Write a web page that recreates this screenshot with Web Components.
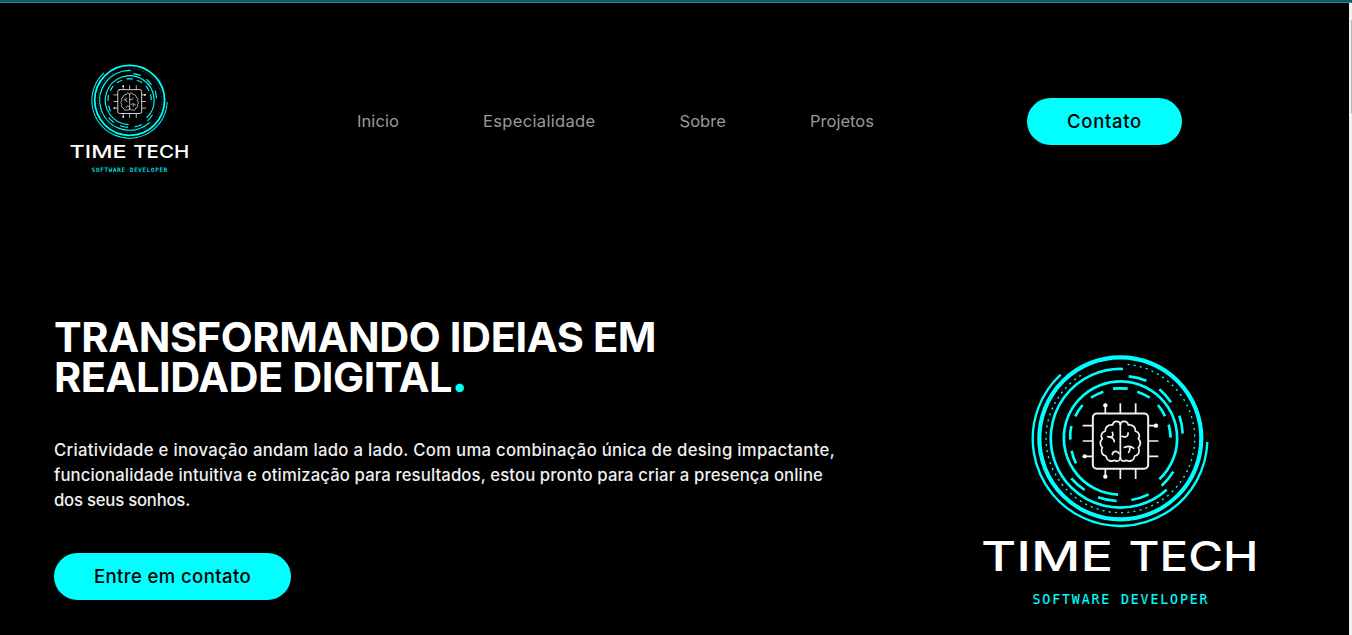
<!DOCTYPE html>
<html lang="pt-BR">
<head>
<meta charset="utf-8">
<title>Time Tech</title>
<style>
html,body{margin:0;height:100%;background:#000;overflow:hidden}
body{font-family:Inter,"Open Sans",sans-serif;color:#fff}
</style>
</head>
<body>
<time-tech-page></time-tech-page>
<script>
function define(name, html, init) {
  const t = document.createElement('template');
  t.innerHTML = html;
  customElements.define(name, class extends HTMLElement {
    constructor() {
      super();
      this.attachShadow({mode: 'open'}).append(t.content.cloneNode(true));
    }
    connectedCallback() { if (init) init(this); }
  });
}

/* A single line of text, tracked so that it fills the given measure. */
define('text-line', `<style>:host{display:block;white-space:nowrap}span{display:inline-block}</style><span><slot></slot></span>`, el => {
  const span = el.shadowRoot.querySelector('span');
  const target = Number(el.getAttribute('measure'));
  const n = el.textContent.length;
  el.style.width = target + 'px';
  span.style.letterSpacing = (target - span.getBoundingClientRect().width) / n + 'px';
});

define('brand-logo', `
<style>
:host{display:block;flex:none}
svg{display:block;width:100%;height:auto;overflow:visible}
.c{fill:none;stroke:#00ffff}
.w{fill:none;stroke:#f4f0ef;stroke-width:5.2;stroke-linecap:round;stroke-linejoin:round}
.n{font:500 41px Inter,sans-serif;fill:#fff}
.s{font:13.2px "DejaVu Sans Mono",monospace;fill:#00ffff;stroke:#00ffff;stroke-width:.15px}
</style>
<svg viewBox="0 0 276 252">
<g transform="translate(38 -9) scale(.33333)">
 <g class="c">
  <circle cx="301" cy="280" r="243" stroke-width="12.500"/>
  <path d="M122 89A262 262 0 1 0 562 291" stroke-width="7"/>
  <path d="M323 58A223 223 0 1 1 186 89" stroke-width="4" stroke-dasharray="6 12.6"/>
  <path d="M309 72A208 208 0 1 0 440 434" stroke-width="8"/>
  <path d="M294 449A170 170 0 1 1 418 403" stroke-width="8"/>
  <path stroke-width="8" d="M326 94A188 188 0 0 1 379 107M418 133A188 188 0 0 1 453 172M478 212A190 190 0 0 1 488 266M460 380A188 188 0 0 1 425 422M154 400A190 190 0 0 0 194 435M234 457A188 188 0 0 0 290 468M334 465A188 188 0 0 0 386 448"/>
  <path stroke-width="8" d="M279 131Q301 129 323 131M213 158Q230 147 250 140M352 140Q372 147 389 158M166 214Q175 195 188 180M414 180Q427 195 435 214M154 243Q149 264 151 284M446 239Q451 258 452 278M155 317Q159 337 168 355"/>
 </g>
 <g class="w">
  <rect x="218.500" y="205.500" width="166" height="166" rx="12" stroke-width="6"/>
  <path stroke-linecap="butt" d="M256 181V205M301 175V205M347 175V205M256 371V395M301 371V402M347 371V402M188 242H218M188 288H218M194 334H218M385 242H408M385 288H415M385 334H415"/>
  <path d="M301 238V340"/>
  <path d="M301 238C299 226 280 225 278 240C264 238 254 248 256 258C243 262 241 274 247 281C238 290 240 302 247 308C240 320 247 332 258 333C260 348 274 351 283 346C292 351 301 347 301 338"/>
  <path d="M301 238C303 226 322 225 325 240C338 238 348 248 346 258C359 262 361 274 355 281C364 290 362 302 355 308C362 320 355 332 344 333C342 348 328 351 319 346C310 351 301 347 301 338"/>
  <path d="M277 262C281 270 278 275 272 277M263 275C274 276 282 280 283 290M277 328C278 318 292 315 297 325M324 264C326 274 315 278 306 274M313 307C323 303 335 304 341 310M329 306C331 314 329 318 326 322"/>
 </g>
 <g fill="#fff"><circle cx="256" cy="181" r="6.500"/><circle cx="408" cy="242" r="6.500"/><circle cx="194" cy="334" r="6.500"/><circle cx="256" cy="395" r="6.500"/></g>
</g>
<text class="n" x="0" y="217" textLength="118" lengthAdjust="spacingAndGlyphs" transform="translate(-1 0) scale(1.120 1)">TIME</text>
<text class="n" x="0" y="217" textLength="116" lengthAdjust="spacingAndGlyphs" transform="translate(146.500 0) scale(1.120 1)">TECH</text>
<text class="s" x="50.500" y="249.500" textLength="175" lengthAdjust="spacing">SOFTWARE DEVELOPER</text>
</svg>`);

define('pill-button', `
<style>
:host{display:flex;box-sizing:border-box;height:47px;padding:0 40px 1px;align-items:center;border-radius:24px;background:#00ffff;color:#000;font-size:18.500px;font-weight:500;line-height:24px;flex:none}
</style><slot></slot>`);

define('site-nav', `
<style>
:host{display:flex;gap:84px;color:#999;font-size:16.500px;font-weight:400;line-height:24px}
</style><slot></slot>`);

define('site-header', `
<style>
:host{display:flex;align-items:flex-start;height:250px;padding:61px 167px 0 69.500px;box-sizing:border-box}
brand-logo{width:119px}
site-nav{margin:45px 0 0 168.500px}
pill-button{margin:34px 0 0 auto}
</style>
<brand-logo></brand-logo>
<site-nav><text-line measure="42">Inicio</text-line><text-line measure="112.500">Especialidade</text-line><text-line measure="46.500">Sobre</text-line><text-line measure="64">Projetos</text-line></site-nav>
<pill-button><text-line measure="75">Contato</text-line></pill-button>`);

define('hero-section', `
<style>
:host{display:flex;justify-content:space-between;padding:64px 91px 0 54px}
h1{margin:0;font-size:41.500px;line-height:40px;font-weight:750}
i{font-style:normal;font-weight:900;color:#00ffff}
p{margin:41px 0 40px;font-size:16.700px;line-height:25px;font-weight:500;color:#f0f0f0}
pill-button{width:237px}
brand-logo{width:276px;margin-top:37px}
</style>
<div>
<h1><text-line measure="602">TRANSFORMANDO IDEIAS EM</text-line><text-line measure="413">REALIDADE DIGITAL<i>.</i></text-line></h1>
<p><text-line measure="781">Criatividade e inovação andam lado a lado. Com uma combinação única de desing impactante,</text-line><text-line measure="769">funcionalidade intuitiva e otimização para resultados, estou pronto para criar a presença online</text-line><text-line measure="136">dos seus sonhos.</text-line></p>
<pill-button><text-line measure="157">Entre em contato</text-line></pill-button>
</div>
<brand-logo></brand-logo>`);

define('scroll-track', `
<style>
:host{display:block;width:3px;background:#f1f1f1;padding:17px 0 0 2px;box-sizing:border-box}
div{height:93px;background:#b5b5b5}
</style><div></div>`);

define('time-tech-page', `
<style>
:host{display:flex;flex-direction:column;height:635px;background:#000}
.top{height:2px;background:#095b66;border-bottom:1px solid #3e7f86;flex:none}
.view{display:flex;flex:1;min-height:0}
main{flex:1;min-width:0}
</style>
<div class="top"></div>
<div class="view"><main><site-header></site-header><hero-section></hero-section></main><scroll-track></scroll-track></div>`);
</script>
</body>
</html>
